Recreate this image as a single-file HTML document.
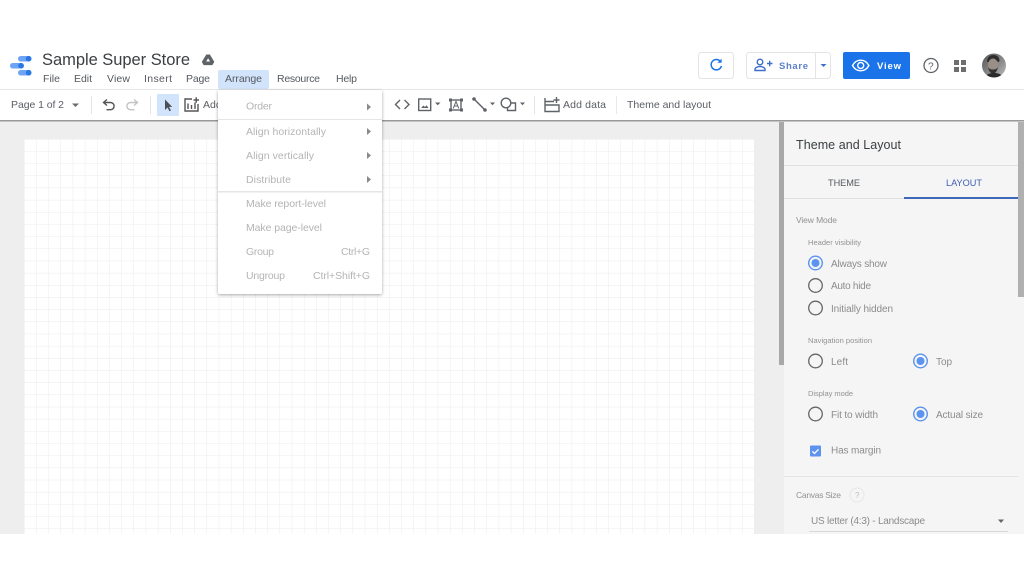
<!DOCTYPE html>
<html>
<head>
<meta charset="utf-8">
<style>
html,body{margin:0;padding:0;width:1024px;height:576px;overflow:hidden;background:#fff}
svg{display:block;filter:blur(.35px)}
text{font-family:"Liberation Sans",sans-serif}
.m{font-size:10.5px;fill:#55595e}
.t{font-size:10.5px;fill:#5a5e63}
.d{font-size:10.5px;fill:#b4b4b4}
.p{font-size:10px;fill:#8c8c8c}
.s{font-size:8px;fill:#929292}
.i{fill:none;stroke:#5f6368;stroke-width:1.4}
</style>
</head>
<body>
<svg width="1024" height="576" viewBox="0 0 1024 576" xmlns="http://www.w3.org/2000/svg">
<defs>
<pattern id="g" x="24" y="139" width="12.17" height="12.17" patternUnits="userSpaceOnUse">
<path d="M0 0V12.17M0 0H12.17" stroke="#ebebeb" stroke-width="1" fill="none"/>
</pattern>
<filter id="sh" x="-10%" y="-10%" width="120%" height="120%"><feDropShadow dx="0" dy="1" stdDeviation="1.6" flood-color="#000" flood-opacity=".35"/></filter>
<linearGradient id="av" x1="0" y1="0" x2="1" y2="1"><stop offset="0" stop-color="#555"/><stop offset=".6" stop-color="#8f8f8f"/><stop offset="1" stop-color="#c4c4c4"/></linearGradient>
</defs>

<!-- work area -->
<rect x="0" y="121" width="1024" height="413" fill="#eeeeee"/>
<rect x="24" y="139" width="730" height="395" fill="#fff"/>
<rect x="24" y="139" width="730" height="395" fill="url(#g)"/>
<rect x="779" y="122" width="5" height="243" fill="#a8a8a8"/>

<!-- right panel -->
<rect x="784" y="121" width="240" height="413" fill="#f5f5f5"/>
<rect x="1018" y="122" width="6" height="175" fill="#b0b0b0"/>
<text x="796" y="149" font-size="12.5" fill="#3c4043" textLength="105" lengthAdjust="spacing">Theme and Layout</text>
<rect x="784" y="165" width="234" height="1" fill="#e0e0e0"/>
<text x="828" y="186" font-size="9.2" fill="#55595e" textLength="32" lengthAdjust="spacing">THEME</text>
<text x="946" y="186" font-size="9.2" fill="#3f5fb5" textLength="36" lengthAdjust="spacing">LAYOUT</text>
<rect x="784" y="198" width="234" height="1" fill="#e0e0e0"/>
<rect x="904" y="197" width="114" height="2" fill="#3f68b8"/>
<text x="796" y="223" class="s" style="font-size:8.5px" textLength="41" lengthAdjust="spacing">View Mode</text>
<text x="808" y="245" class="s" style="font-size:7.5px" textLength="53" lengthAdjust="spacing">Header visibility</text>

<circle cx="815.5" cy="263" r="6.8" fill="none" stroke="#5b93ee" stroke-width="1.4"/><circle cx="815.5" cy="263" r="4" fill="#5b93ee"/>
<text x="831" y="267" class="p" textLength="56" lengthAdjust="spacing">Always show</text>
<circle cx="815.5" cy="285.5" r="6.8" fill="none" stroke="#666" stroke-width="1.3"/>
<text x="831" y="289" class="p" textLength="40" lengthAdjust="spacing">Auto hide</text>
<circle cx="815.5" cy="308" r="6.8" fill="none" stroke="#666" stroke-width="1.3"/>
<text x="831" y="312" class="p" textLength="62" lengthAdjust="spacing">Initially hidden</text>

<text x="808" y="343" class="s" style="font-size:7.5px" textLength="64" lengthAdjust="spacing">Navigation position</text>
<circle cx="815.5" cy="361" r="6.8" fill="none" stroke="#666" stroke-width="1.3"/>
<text x="831" y="365" class="p" textLength="17" lengthAdjust="spacing">Left</text>
<circle cx="920.5" cy="361" r="6.8" fill="none" stroke="#5b93ee" stroke-width="1.4"/><circle cx="920.5" cy="361" r="4" fill="#5b93ee"/>
<text x="936" y="365" class="p" textLength="16" lengthAdjust="spacing">Top</text>

<text x="808" y="396" class="s" style="font-size:7.5px" textLength="45" lengthAdjust="spacing">Display mode</text>
<circle cx="815.5" cy="414" r="6.8" fill="none" stroke="#666" stroke-width="1.3"/>
<text x="831" y="418" class="p" textLength="47" lengthAdjust="spacing">Fit to width</text>
<circle cx="920.5" cy="414" r="6.8" fill="none" stroke="#5b93ee" stroke-width="1.4"/><circle cx="920.5" cy="414" r="4" fill="#5b93ee"/>
<text x="936" y="418" class="p" textLength="47" lengthAdjust="spacing">Actual size</text>

<rect x="810" y="445.500" width="11" height="11" rx="1" fill="#5b93ee"/>
<path d="M812.3 451.3l2.2 2.2 4-4.2" fill="none" stroke="#fff" stroke-width="1.3"/>
<text x="831" y="453.500" class="p" textLength="50" lengthAdjust="spacing">Has margin</text>
<rect x="784" y="476" width="234" height="1" fill="#e4e4e4"/>
<text x="796" y="498" class="s" style="font-size:8.5px" textLength="45" lengthAdjust="spacing">Canvas Size</text>
<circle cx="857" cy="495" r="7" fill="none" stroke="#e6e6e6" stroke-width="1"/>
<text x="855" y="498" font-size="8" fill="#bdbdbd">?</text>
<text x="811" y="524" class="p" textLength="114" lengthAdjust="spacing">US letter (4:3) - Landscape</text>
<path d="M998 519.500h6l-3 3.500z" fill="#666"/>
<rect x="809" y="531" width="199" height="1" fill="#d8d8d8"/>

<!-- header -->
<rect x="0" y="0" width="1024" height="89" fill="#fff"/>
<rect x="0" y="89" width="1024" height="1" fill="#e6e6e6"/>
<!-- logo -->
<rect x="18" y="56" width="13.500" height="5.500" rx="2.700" fill="#6fa4f5"/><circle cx="28.600" cy="58.700" r="2.800" fill="#2a78e4"/>
<rect x="10" y="63" width="14" height="5.500" rx="2.700" fill="#6fa4f5"/><circle cx="21" cy="65.700" r="2.800" fill="#2a78e4"/>
<rect x="18" y="70" width="13.500" height="5.500" rx="2.700" fill="#6fa4f5"/><circle cx="28.600" cy="72.700" r="2.800" fill="#2a78e4"/>

<text x="42" y="65" font-size="16.500" fill="#3c4043" textLength="148" lengthAdjust="spacing">Sample Super Store</text>
<path d="M206.300 54.500h3.600l4.400 7.400-1.900 3.200h-8.800l-1.800-3.200z" fill="#5f6368"/>
<path d="M208.100 58.200l-1.900 3.300h3.900z" fill="#fff"/>

<rect x="218" y="70" width="51" height="19" rx="2" fill="#d2e3fc"/>
<text x="43" y="82" class="m" textLength="17" lengthAdjust="spacing">File</text>
<text x="74" y="82" class="m" textLength="18" lengthAdjust="spacing">Edit</text>
<text x="107" y="82" class="m" textLength="23" lengthAdjust="spacing">View</text>
<text x="144" y="82" class="m" textLength="28" lengthAdjust="spacing">Insert</text>
<text x="186" y="82" class="m" textLength="24" lengthAdjust="spacing">Page</text>
<text x="225" y="82" class="m" textLength="37" lengthAdjust="spacing">Arrange</text>
<text x="277" y="82" class="m" textLength="43" lengthAdjust="spacing">Resource</text>
<text x="336" y="82" class="m" textLength="21" lengthAdjust="spacing">Help</text>

<!-- header right -->
<rect x="698.500" y="52.500" width="35" height="26" rx="3" fill="#fff" stroke="#e4e4e4"/>
<path d="M720.500 61.500a5.200 5.200 0 1 0 .9 4.500" fill="none" stroke="#1a73e8" stroke-width="1.500"/>
<path d="M721.600 58.600v4.200h-4.200z" fill="#1a73e8"/>

<rect x="746.500" y="52.500" width="84" height="26" rx="3" fill="#fff" stroke="#e4e4e4"/>
<rect x="815" y="53" width="1" height="25" fill="#e4e4e4"/>
<circle cx="760" cy="62" r="2.800" fill="none" stroke="#3f6fc8" stroke-width="1.400"/>
<path d="M755 70.500v-1.200c0-1.800 3-2.800 5-2.800s5 1 5 2.800v1.200z" fill="none" stroke="#3f6fc8" stroke-width="1.400"/>
<path d="M767 63.500h5.500M769.700 60.800v5.500" stroke="#3f6fc8" stroke-width="1.400"/>
<text x="779" y="69" font-size="9.500" font-weight="bold" fill="#5c82cc" textLength="29" lengthAdjust="spacing">Share</text>
<path d="M820.500 64h6l-3 3z" fill="#3f6fc8"/>

<rect x="843" y="52" width="67" height="27" rx="2" fill="#1a73e8"/>
<path d="M852.500 65.500c2-3.600 5-5.300 8.200-5.300s6.200 1.700 8.200 5.300c-2 3.600-5 5.300-8.200 5.300s-6.200-1.700-8.200-5.300z" fill="none" stroke="#fff" stroke-width="1.400"/>
<circle cx="860.700" cy="65.500" r="3" fill="none" stroke="#fff" stroke-width="1.400"/>
<text x="877" y="69" font-size="9.500" font-weight="bold" fill="#fff" textLength="24" lengthAdjust="spacing">View</text>

<circle cx="931" cy="65.500" r="7" fill="none" stroke="#5f6368" stroke-width="1.300"/>
<text x="928" y="69.500" font-size="10" fill="#5f6368">?</text>
<rect x="954" y="60" width="5" height="5" fill="#6e6e6e"/><rect x="961" y="60" width="5" height="5" fill="#6e6e6e"/>
<rect x="954" y="67" width="5" height="5" fill="#6e6e6e"/><rect x="961" y="67" width="5" height="5" fill="#6e6e6e"/>
<clipPath id="ac"><circle cx="994" cy="65.500" r="12"/></clipPath>
<g clip-path="url(#ac)">
<rect x="982" y="53" width="25" height="25" fill="url(#av)"/>
<path d="M987 62c0-5 3-7 6.500-7s6 2 6 6l-1 1c-3-2-7-2-10 0z" fill="#2e2e2e"/>
<ellipse cx="993" cy="65" rx="5" ry="6.500" fill="#9a8f87"/>
<path d="M988 67c1 5 3 6.500 5 6.500s4-1.500 5-6.500c-1 2-3 2.500-5 2.500s-4-.5-5-2.500z" fill="#333"/>
<path d="M985 78c1-4 5-5 9-5s8 1 9 5z" fill="#2a2a2a"/>
</g>

<!-- toolbar -->
<rect x="0" y="90" width="1024" height="30" fill="#fff"/>
<rect x="0" y="120" width="1024" height="1" fill="#999"/>
<rect x="0" y="121" width="1024" height="1" fill="#c4c4c4"/>
<text x="11" y="108" class="t" textLength="53" lengthAdjust="spacing">Page 1 of 2</text>
<path d="M72 103.500h7l-3.500 3.500z" fill="#6b6b6b"/>
<rect x="91" y="96" width="1" height="18" fill="#e4e4e4"/>
<path d="M107 99.500l-3.500 3 3.500 3M104 102.500h6.500a3.600 3.600 0 0 1 0 7.200h-4" fill="none" stroke="#555" stroke-width="1.400"/>
<path d="M134 99.500l3.500 3-3.500 3M137 102.500h-6.500a3.600 3.600 0 0 0 0 7.200h4" fill="none" stroke="#c4c4c4" stroke-width="1.400"/>
<rect x="150" y="96" width="1" height="18" fill="#e4e4e4"/>
<rect x="157" y="94" width="22" height="22" rx="1" fill="#d2e3fc"/>
<path d="M165 99.500v10.500l2.500-2.500 2 3.800 1.500-.8-2-3.600h3.200z" fill="#4a4f55"/>
<path d="M192 99h-7v12h13v-7" fill="none" stroke="#555" stroke-width="1.400"/>
<path d="M188 103.500v5.500M191.500 105v4M195 102.500v6.500" stroke="#555" stroke-width="1.400"/>
<path d="M193.500 100h5.500M196.200 97.200v5.500" stroke="#555" stroke-width="1.400"/>
<text x="203" y="108" class="t">Add</text>

<path d="M400 100l-4.500 4.500 4.500 4.500M404.500 100l4.500 4.500-4.500 4.500" class="i"/>
<rect x="418.700" y="99" width="12" height="11.500" class="i"/>
<path d="M421 108l2.500-2.500 1.500 1.500 1.500-1.800 2 2.800z" fill="#5f6368"/>
<path d="M435 102.500h5.500l-2.750 2.750z" fill="#5f6368"/>
<rect x="451" y="100" width="10" height="10" class="i" stroke-width="1.100"/>
<path d="M449 98.500h3v3h-3zM460 98.500h3v3h-3zM449 108.500h3v3h-3zM460 108.500h3v3h-3z" fill="#5f6368"/>
<path d="M453.200 108.500l2.800-7 2.800 7M454.200 106h3.600" fill="none" stroke="#5f6368" stroke-width="1"/>
<path d="M474 99l11 11" stroke="#5f6368" stroke-width="1.500"/>
<circle cx="474" cy="99" r="1.800" fill="#5f6368"/><circle cx="485" cy="110" r="1.800" fill="#5f6368"/>
<path d="M490 102.500h5l-2.500 2.750z" fill="#5f6368"/>
<circle cx="506" cy="103" r="4.800" class="i"/>
<path d="M511.500 103h4v7.500h-8v-3.500" class="i"/>
<path d="M520 102.500h5l-2.500 2.750z" fill="#5f6368"/>
<rect x="534" y="96" width="1" height="18" fill="#e4e4e4"/>
<path d="M545 98v13.500h14v-6.500h-14M545 101.500h9M545 105h9" class="i"/>
<path d="M553.500 100h6M556.500 97v6" stroke="#5f6368" stroke-width="1.400"/>
<text x="563" y="108" class="t" textLength="43" lengthAdjust="spacing">Add data</text>
<rect x="616" y="96" width="1" height="18" fill="#e8e8e8"/>
<text x="627" y="108" class="t" textLength="84" lengthAdjust="spacing">Theme and layout</text>

<!-- arrange menu -->
<rect x="218" y="90" width="164" height="204" rx="2" fill="#fff" filter="url(#sh)"/>
<rect x="218" y="119" width="164" height="1" fill="#e6e6e6"/>
<rect x="218" y="191" width="164" height="1.500" fill="#e6e6e6"/>
<text x="246" y="109.500" class="d" textLength="26" lengthAdjust="spacing">Order</text>
<text x="246" y="135" class="d" textLength="80" lengthAdjust="spacing">Align horizontally</text>
<text x="246" y="159" class="d" textLength="68" lengthAdjust="spacing">Align vertically</text>
<text x="246" y="183" class="d" textLength="45" lengthAdjust="spacing">Distribute</text>
<text x="246" y="207" class="d" textLength="80" lengthAdjust="spacing">Make report-level</text>
<text x="246" y="231" class="d" textLength="76" lengthAdjust="spacing">Make page-level</text>
<text x="246" y="255" class="d" textLength="28" lengthAdjust="spacing">Group</text>
<text x="341" y="255" class="d" textLength="29" lengthAdjust="spacing">Ctrl+G</text>
<text x="246" y="279" class="d" textLength="39" lengthAdjust="spacing">Ungroup</text>
<text x="313" y="279" class="d" textLength="57" lengthAdjust="spacing">Ctrl+Shift+G</text>
<path d="M367 103.500l4 3.500-4 3.500zM367 128l4 3.500-4 3.500zM367 152l4 3.500-4 3.500zM367 176l4 3.500-4 3.500z" fill="#8a8a8a"/>

<!-- bottom white band -->
<rect x="0" y="534" width="1024" height="42" fill="#fff"/>
</svg>
</body>
</html>
